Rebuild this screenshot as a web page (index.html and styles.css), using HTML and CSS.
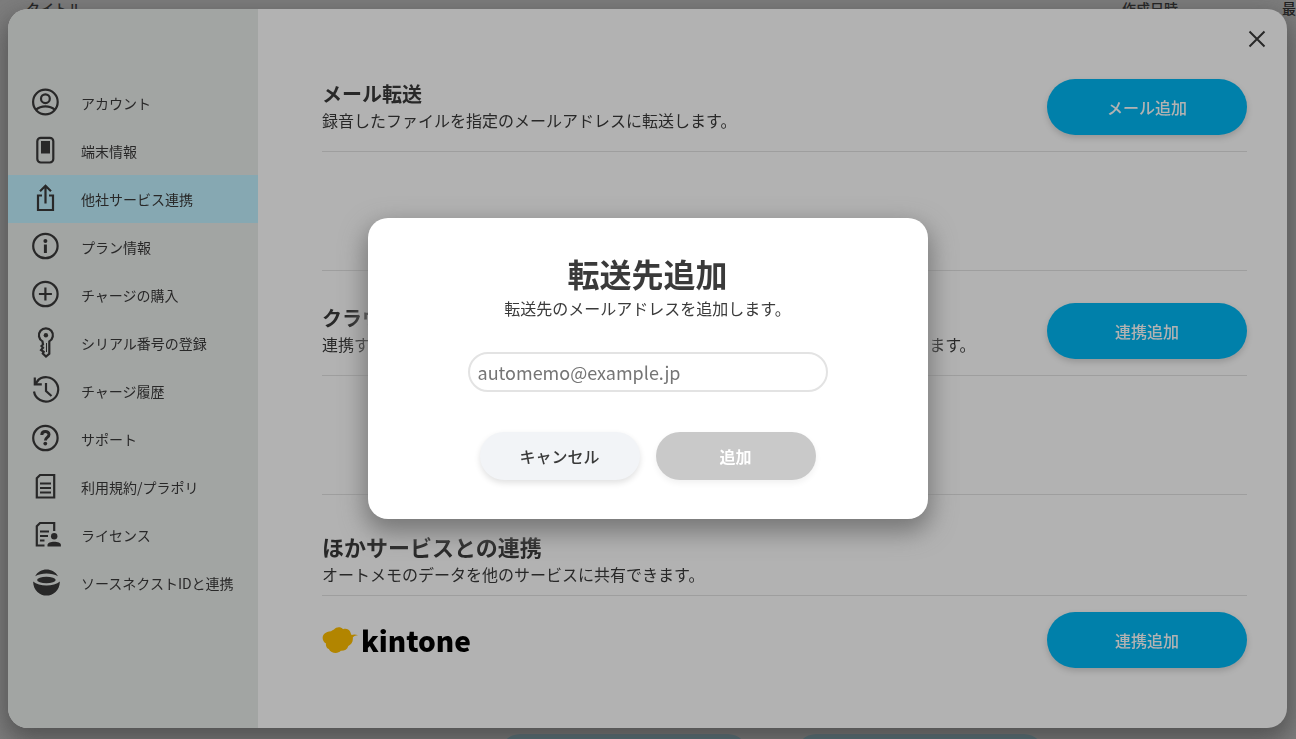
FILE: index.html
```html
<!DOCTYPE html>
<html lang="ja">
<head>
  <meta charset="UTF-8">
  <title>他社サービス連携</title>
  <link rel="stylesheet" href="styles.css">
</head>
<body>

  <!-- File list behind the settings -->
  <div class="page">
    <div class="list-head">
      <span class="col-title">タイトル</span>
      <span class="col-date">作成日時</span>
      <span class="col-updated">最終更新</span>
    </div>
    <div class="list-foot">
      <span class="foot-pill"></span>
      <span class="foot-pill"></span>
    </div>
  </div>

  <!-- Settings -->
  <div class="overlay">
    <div class="settings">
      <nav class="sidebar">
        <a class="nav-item" href="#account">
          <svg class="nav-icon" viewBox="0 0 32 32"><circle cx="16.400" cy="15" r="12.300"/><circle cx="16.400" cy="11.700" r="4.400"/><path d="M7 22.600c5-4.400 13.800-4.400 18.800 0"/></svg>
          <span>アカウント</span>
        </a>
        <a class="nav-item" href="#device">
          <svg class="nav-icon" viewBox="0 0 32 32"><rect x="8.300" y="2.800" width="16" height="24.700" rx="3.500"/><rect class="fill" x="12" y="6" width="9" height="12.500"/></svg>
          <span>端末情報</span>
        </a>
        <a class="nav-item active" href="#services">
          <svg class="nav-icon" viewBox="0 0 32 32"><path d="M13 12.500H9v14.500h15V12.500H20M16.500 20.500V2.500M11 8.200 16.500 2.700 22 8.200"/></svg>
          <span>他社サービス連携</span>
        </a>
        <a class="nav-item" href="#plan">
          <svg class="nav-icon" viewBox="0 0 32 32"><circle cx="16.400" cy="15" r="12.200"/><circle class="fill" cx="16.400" cy="10" r="2"/><path class="bold" d="M16.400 13.500v8.500"/></svg>
          <span>プラン情報</span>
        </a>
        <a class="nav-item" href="#charge">
          <svg class="nav-icon" viewBox="0 0 32 32"><circle cx="16.400" cy="15" r="12.200"/><path d="M16.400 8.500v13M9.900 15h13"/></svg>
          <span>チャージの購入</span>
        </a>
        <a class="nav-item" href="#serial">
          <svg class="nav-icon" viewBox="0 0 32 32"><path d="M13.500 14.400a7 7 0 1 1 6.800 0v12.400l-3.300 2.700-3.200-3 .9-1.700-2.600-1.800 1.900-2.200-1.500-1.700 1.500-1.600z"/><circle class="fill" cx="16.900" cy="8.200" r="2.200"/><path class="thin" d="M17.500 16v9"/></svg>
          <span>シリアル番号の登録</span>
        </a>
        <a class="nav-item" href="#history">
          <svg class="nav-icon" viewBox="0 0 32 32"><path d="M5 16.500A12.200 12.200 0 1 0 8.200 6M5.800 2.500V9.300H12.800M6 9.300l3.500-4.300M17 8v8l5.500 5"/></svg>
          <span>チャージ履歴</span>
        </a>
        <a class="nav-item" href="#support">
          <svg class="nav-icon" viewBox="0 0 32 32"><circle cx="16.400" cy="15" r="12.200"/><path class="bold" d="M12.800 12c0-4.600 7.200-4.600 7.200-.4 0 2.900-3.600 2.700-3.600 5.900"/><circle class="fill" cx="16.300" cy="20.600" r="1.900"/></svg>
          <span>サポート</span>
        </a>
        <a class="nav-item" href="#terms">
          <svg class="nav-icon" viewBox="0 0 32 32"><path d="M11 4H25.200v22.500H7.800V7.200zM11 12.500h11M11 17h11M11 21.500h11"/></svg>
          <span>利用規約/プラポリ</span>
        </a>
        <a class="nav-item" href="#license">
          <svg class="nav-icon" viewBox="0 0 32 32"><path d="M25.200 12V4H11L7.800 7.200v19.300h7.700M11 12.500h9M11 17h8M11 21.500h4.500"/><circle class="fill" cx="25.200" cy="17.300" r="3.200"/><path class="fill" d="M18.500 27.500v-1.700c0-4.200 13.400-4.200 13.400 0v1.700z"/></svg>
          <span>ライセンス</span>
        </a>
        <a class="nav-item" href="#sourcenext">
          <svg class="nav-icon" viewBox="0 0 32 32"><path class="fill" d="M6.200 9.300C10.500.2 24.500.2 29 9.300 22.500 5.700 12.500 5.700 6.200 9.300z"/><ellipse class="fill" cx="17.400" cy="13" rx="9.300" ry="3.300"/><path class="fill" d="M4.100 14.500c6 5.300 20.800 5.300 26.800 0C30.400 33.300 4.600 33.300 4.100 14.500z"/></svg>
          <span>ソースネクストIDと連携</span>
        </a>
      </nav>

      <main class="content">
        <button class="close" type="button" aria-label="閉じる">
          <svg viewBox="0 0 16 16"><path d="M.500.500l15 15M15.500.500l-15 15"/></svg>
        </button>

        <section>
          <div class="section-head">
            <div>
              <h2>メール転送</h2>
              <p>録音したファイルを指定のメールアドレスに転送します。</p>
            </div>
            <button class="btn-primary" type="button">メール追加</button>
          </div>
          <div class="section-list"></div>
        </section>

        <section>
          <div class="section-head">
            <div>
              <h2>クラウド連携</h2>
              <p>連携するとクラウドストレージに音声ファイルとテキストデータを自動的に保存できます。</p>
            </div>
            <button class="btn-primary" type="button">連携追加</button>
          </div>
          <div class="section-list"></div>
        </section>

        <section class="others">
          <div class="section-head">
            <div>
              <h2>ほかサービスとの連携</h2>
              <p>オートメモのデータを他のサービスに共有できます。</p>
            </div>
          </div>
          <div class="service">
            <div class="kintone">
              <svg viewBox="0 0 36 26"><path d="M9 4.300C10 3.500 11 3 12 2.500c2.500-3 7-2.800 9-.3 3-1 6.500-.2 7.700 3.800.3 1 .4 1.500 1 2 1.500-.6 4-.8 6.300.3-3 .2-4.500 1-5.200 2.200.5 4-1.500 7-4.500 8.500-1 3.500-4 5-7.500 4.800-3 3.500-10 2.500-12-1.800C5 21.500 3.500 19 4 16.500-1.500 13-.5 5 9 4.300z"/></svg>
              <span>kintone</span>
            </div>
            <button class="btn-primary" type="button">連携追加</button>
          </div>
        </section>
      </main>
    </div>
  </div>

  <!-- Add address dialog -->
  <div class="overlay">
    <form class="dialog" role="dialog" aria-labelledby="dialogTitle">
      <h1 id="dialogTitle">転送先追加</h1>
      <label for="email">転送先のメールアドレスを追加します。</label>
      <input id="email" type="email" placeholder="automemo@example.jp">
      <div class="dialog-buttons">
        <button class="btn-cancel" type="button">キャンセル</button>
        <button class="btn-add" type="submit" disabled>追加</button>
      </div>
    </form>
  </div>

</body>
</html>
```
FILE: styles.css
```css
* {
  box-sizing: border-box;
}

body {
  margin: 0;
  height: 100vh;
  overflow: hidden;
  background: #fff;
  color: #3a3a3a;
  font-family: "Noto Sans CJK JP", sans-serif;
  font-size: 16px;
  line-height: 24px;
}

h1, h2, p {
  margin: 0;
}

button, input {
  font-family: inherit;
}

.page {
  height: 100vh;
  display: flex;
  flex-direction: column;
  justify-content: space-between;
  overflow: hidden;
}

.list-head {
  display: flex;
  padding-left: 26px;
  margin-top: -4px;
  font-size: 14px;
  font-weight: 500;
  white-space: nowrap;
}

.col-title {
  flex: 1;
}

.col-date {
  width: 160px;
}

.col-updated {
  width: 14px;
}

.list-foot {
  display: flex;
  justify-content: center;
  gap: 48px;
  height: 5px;
  padding-left: 248px;
}

.foot-pill {
  width: 248px;
  height: 40px;
  border-radius: 20px;
  background: #7fdcfa;
}

.overlay {
  position: fixed;
  inset: 0;
  display: flex;
  align-items: center;
  justify-content: center;
  padding: 9px 9px 11px 8px;
  background: rgba(0, 0, 0, 0.3);
}

/* settings */
.settings {
  display: flex;
  width: 100%;
  height: 100%;
  border-radius: 20px;
  overflow: hidden;
  background: #fff;
  box-shadow: 0 10px 25px 3px #777;
}

.sidebar {
  width: 250px;
  padding-top: 70px;
  background: #e9ecea;
}

.nav-item {
  display: flex;
  align-items: center;
  gap: 20px;
  height: 48px;
  padding-left: 21px;
  color: #3a3a3a;
  font-size: 14px;
  text-decoration: none;
  white-space: nowrap;
}

.nav-item span {
  padding-bottom: 1px;
}

.nav-item.active {
  background: #c1f1ff;
}

.nav-icon {
  width: 32px;
  height: 32px;
  fill: none;
  stroke: #3a3a3a;
  stroke-width: 2.2;
}

.nav-icon .fill {
  fill: #3a3a3a;
  stroke: none;
}

.nav-icon .bold {
  stroke-width: 3;
}

.nav-icon .thin {
  stroke-width: 1;
}

.content {
  position: relative;
  flex: 1;
  padding: 70px 40px 0 64px;
}

.close {
  position: absolute;
  top: 18px;
  right: 18px;
  width: 24px;
  height: 24px;
  padding: 4px;
  border: none;
  background: none;
}

.close svg {
  display: block;
  width: 16px;
  height: 16px;
  overflow: visible;
  stroke: #3a3a3a;
  stroke-width: 2;
}

.section-head {
  display: flex;
  align-items: flex-start;
  justify-content: space-between;
  padding-bottom: 16px;
  border-bottom: 1px solid #e3e3e3;
}

.section-head p {
  line-height: 22px;
}

h2 {
  font-size: 20px;
  line-height: 30px;
}

.section-list {
  height: 119px;
  margin-bottom: 32px;
  border-bottom: 1px solid #e3e3e3;
}

.btn-primary {
  width: 200px;
  height: 56px;
  border: none;
  border-radius: 28px;
  background: #00b8f4;
  color: #fff;
  font-size: 16px;
  font-weight: 500;
  box-shadow: 0 3px 6px rgba(0, 0, 0, 0.16);
}

.others .section-head {
  padding: 3px 0 10px;
}

.others h2 {
  font-size: 22px;
  line-height: 33px;
}

.service {
  display: flex;
  align-items: center;
  justify-content: space-between;
  padding-top: 16px;
}

.kintone {
  display: flex;
  align-items: center;
  gap: 3px;
  color: #000;
  font-size: 28px;
  font-weight: 900;
}

.kintone svg {
  width: 36px;
  height: 26px;
  fill: #ffbf00;
}

/* dialog */
.dialog {
  display: flex;
  flex-direction: column;
  align-items: center;
  width: 560px;
  padding: 32px 40px 39px;
  border-radius: 20px;
  background: #fff;
  box-shadow: 0 10px 25px 3px #777;
}

.dialog h1 {
  font-size: 32px;
  line-height: 46px;
}

.dialog input {
  width: 360px;
  height: 40px;
  margin: 32px 0 40px;
  padding: 0 8px;
  border: 2px solid #e3e3e3;
  border-radius: 20px;
  font-size: 18px;
}

.dialog input::placeholder {
  color: #757575;
}

.dialog-buttons {
  display: flex;
  gap: 16px;
}

.dialog-buttons button {
  width: 160px;
  height: 48px;
  border: none;
  border-radius: 24px;
  font-size: 16px;
  font-weight: 500;
}

.dialog-buttons .btn-cancel {
  background: #f2f4f7;
  color: #3a3a3a;
  box-shadow: 0 3px 6px rgba(0, 0, 0, 0.12);
}

.dialog-buttons .btn-add {
  background: #c9c9c9;
  color: #fff;
  font-weight: bold;
  box-shadow: 0 3px 6px rgba(0, 0, 0, 0.06);
}
```
